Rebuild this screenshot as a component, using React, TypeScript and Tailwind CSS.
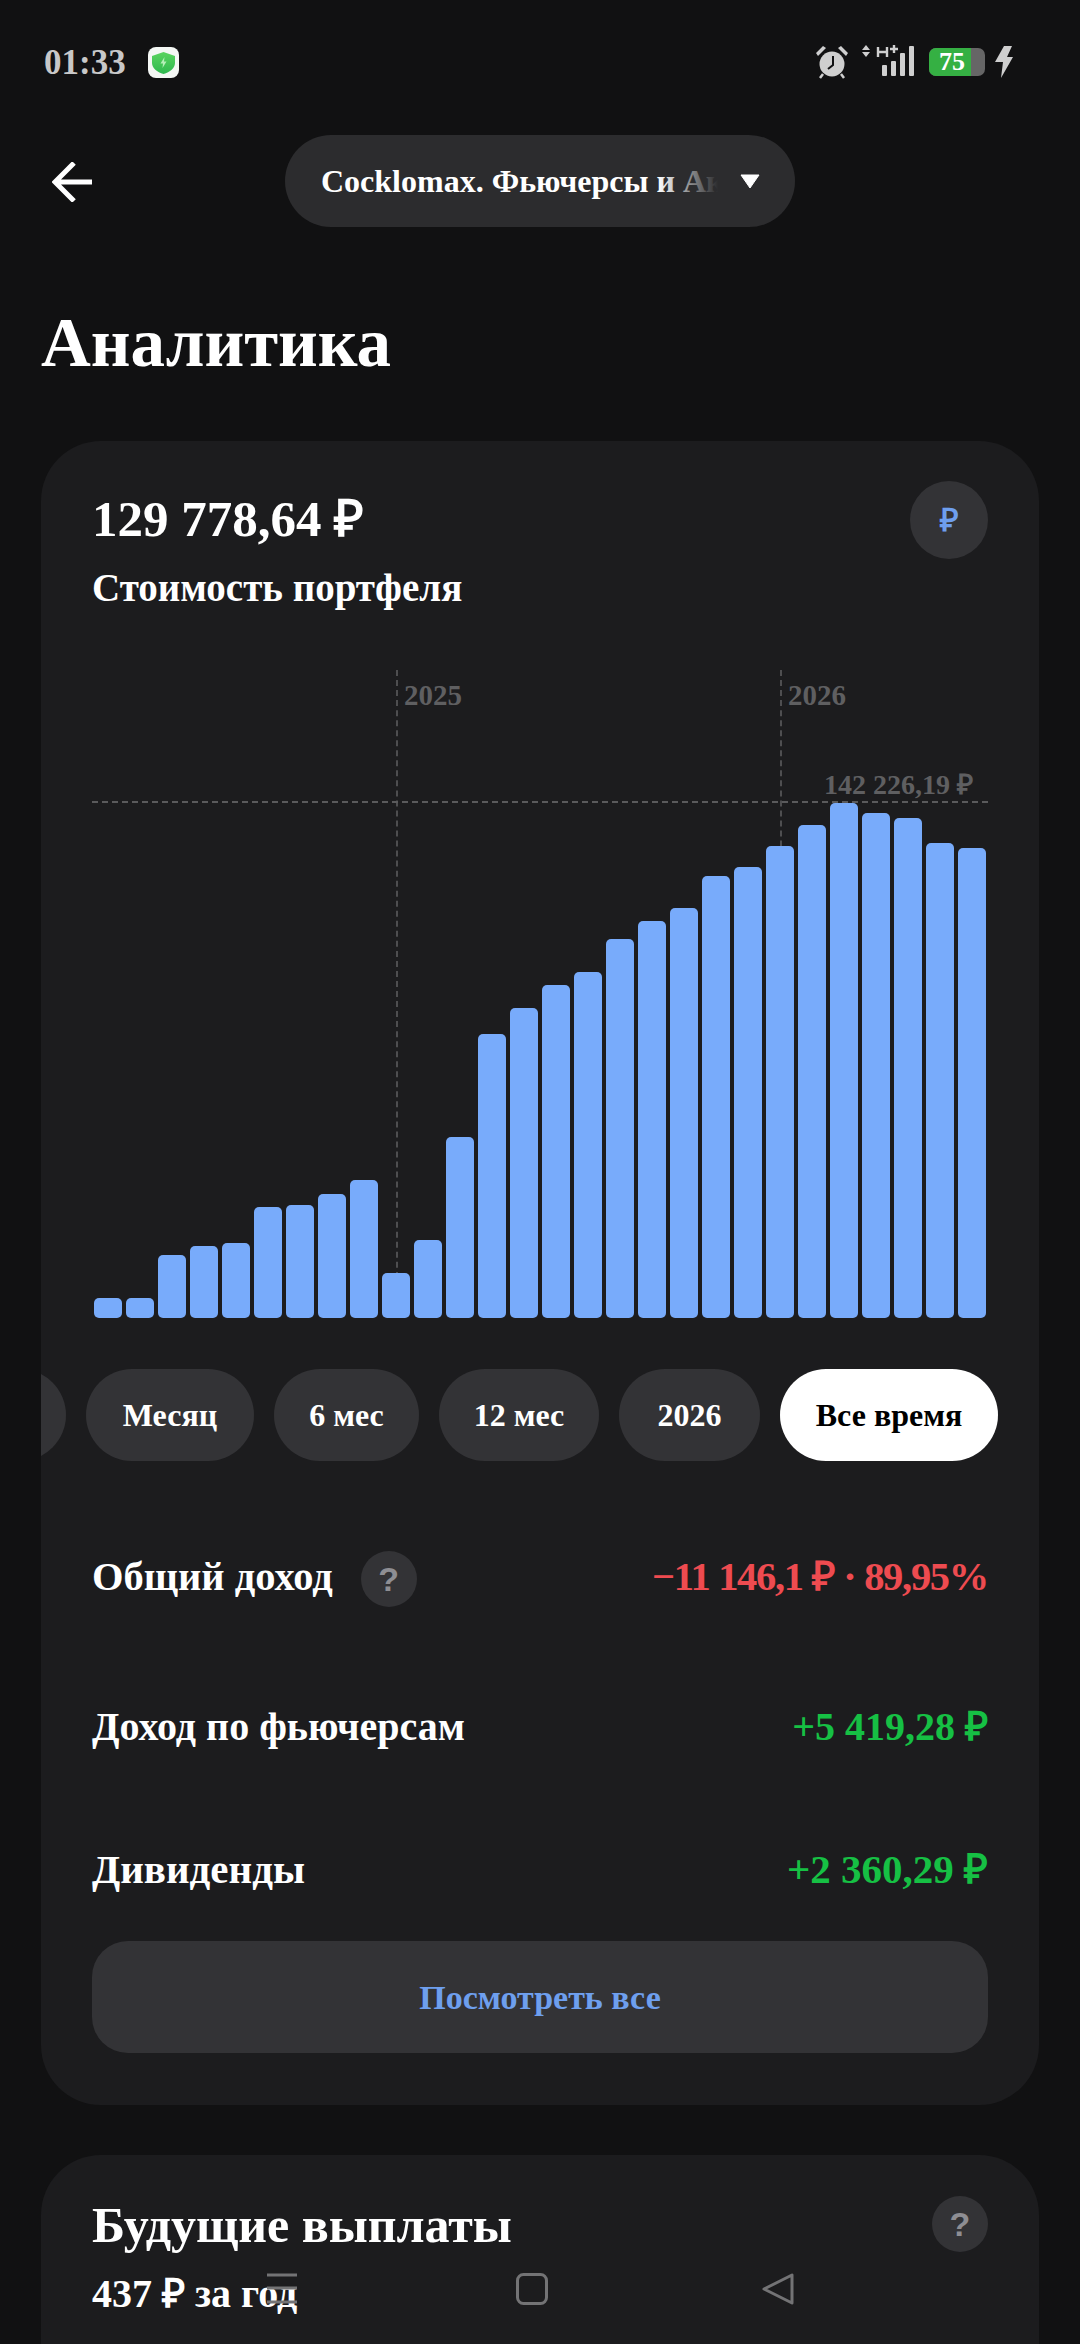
const serif = "font-['Liberation_Serif',serif]"

const bars = [20, 20, 63, 72, 75, 111, 113, 124, 138, 45, 78, 181, 284, 310, 333, 346, 379, 397, 410, 442, 451, 472, 493, 515, 505, 500, 475, 470]

const periods = [
  { label: "Месяц", w: "w-[168px]" },
  { label: "6 мес", w: "w-[145px]" },
  { label: "12 мес", w: "w-[160px]" },
  { label: "2026", w: "w-[141px]" },
]

const rows = [
  { label: "Доход по фьючерсам", value: "+5 419,28 ₽", cls: "mt-[50px] text-[40px]" },
  { label: "Дивиденды", value: "+2 360,29 ₽", cls: "mt-[43px] text-[41px]" },
]

const QuestionBadge = () => (
  <div className="flex h-14 w-14 shrink-0 items-center justify-center rounded-full bg-[#333336] text-[34px] font-bold text-[#8e8e93] font-['Liberation_Sans',sans-serif]">
    ?
  </div>
)

const StatusBar = () => (
  <div className="flex h-[124px] items-center justify-between pl-11 pr-[67px]">
    <div className="flex items-center gap-[22px]">
      <span className="text-[35px] font-bold leading-none text-[#c8c8c8]">01:33</span>
      <svg width="31" height="31" viewBox="0 0 31 31">
        <defs>
          <linearGradient id="shield" x1="0" y1="0" x2="0" y2="1">
            <stop offset="0" stopColor="#5ad45f" />
            <stop offset="1" stopColor="#2fb84f" />
          </linearGradient>
        </defs>
        <rect width="31" height="31" rx="8" fill="#f4f7f4" />
        <path d="M15.5 5 L27 9 V16 C27 21 22 25 15.5 27 C9 25 4 21 4 16 V9 Z" fill="url(#shield)" />
        <path d="M16.5 10 L12.5 16.5 H15 L14.5 21 L18.5 14.5 H16 Z" fill="#b5efb8" />
      </svg>
    </div>
    <div className="flex items-center">
      <svg width="34" height="34" viewBox="0 0 34 34" fill="#cfcfcf" className="mr-[13px]">
        <circle cx="17" cy="19" r="12.5" />
        <path d="M1 8 L8 1 L11 3 L3 11 Z M33 8 L26 1 L23 3 L31 11 Z" />
        <path d="M8 29 L5 33 M26 29 L29 33" stroke="#cfcfcf" strokeWidth="2.5" />
        <path d="M18 11 V20 L13 24" stroke="#111112" strokeWidth="2" fill="none" />
      </svg>
      <svg width="54" height="34" viewBox="0 0 54 34" fill="#cfcfcf" className="mr-[13px]">
        <path d="M4 0 L8 5 H0 Z M4 12 L8 7 H0 Z" />
        <path d="M16 2 V12 M25 2 V12 M16 7 H25 M28 4 H36 M32 0 V8" stroke="#cfcfcf" strokeWidth="2.4" fill="none" />
        <rect x="20" y="20" width="5" height="11" rx="1" />
        <rect x="29" y="16" width="5" height="15" rx="1" />
        <rect x="38" y="8" width="5" height="23" rx="1" />
        <rect x="47" y="1" width="5" height="30" rx="1" />
      </svg>
      <div className="relative mr-[10px] h-7 w-[56px] overflow-hidden rounded-[7px] bg-[#666]">
        <div className="flex h-full w-[42px] items-center justify-center bg-[#35b043] pl-1 text-[26px] font-bold leading-none text-white">75</div>
      </div>
      <svg width="18" height="32" viewBox="0 0 18 32" fill="#cfcfcf">
        <path d="M9 0 L17 0 L12 11 L18 11 L6 32 L8 16 L0 16 Z" />
      </svg>
    </div>
  </div>
)

const Header = () => (
  <div className="relative mt-[11px] flex h-[92px] items-center justify-center">
    <svg width="40" height="40" viewBox="0 0 40 40" fill="none" stroke="#fff" strokeWidth="5" className="absolute left-[52px] top-[27px]">
      <path d="M40 20 H3 M22 1 L3 20 L22 39" />
    </svg>
    <div className="flex h-[92px] w-[510px] items-center rounded-full bg-[#2c2c2e] pl-9">
      <div className="relative w-[397px] overflow-hidden whitespace-nowrap text-[32px] font-bold text-white">
        Cocklomax. Фьючерсы и Акции
        <div className="absolute inset-y-0 right-0 w-[60px] bg-gradient-to-r from-transparent to-[#2c2c2e]" />
      </div>
      <svg width="20" height="15" viewBox="0 0 20 15" className="ml-[22px]">
        <path d="M1 1 H19 L10 14 Z" fill="#fff" stroke="#fff" strokeLinejoin="round" />
      </svg>
    </div>
  </div>
)

const Chart = () => (
  <div className="relative mx-[51px] mt-[58px] flex h-[648px] items-end gap-1 pl-[2px]">
    {bars.map((h, i) => (
      <div key={i} className="relative z-10 w-7 rounded-[5px] bg-[#78abfb]" style={{ height: h }} />
    ))}
    <div className="absolute bottom-0 left-[304px] top-0 border-l-2 border-dashed border-[#4e4e50]" />
    <div className="absolute left-[312px] top-[8px] text-[29px] font-bold leading-[34px] text-[#5f5f61]">2025</div>
    <div className="absolute bottom-0 left-[688px] top-0 border-l-2 border-dashed border-[#4e4e50]" />
    <div className="absolute left-[696px] top-[8px] text-[29px] font-bold leading-[34px] text-[#5f5f61]">2026</div>
    <div className="absolute inset-x-0 top-[131px] border-t-2 border-dashed border-[#5a5a5c]" />
    <div className="absolute right-[15px] top-[98px] text-[28px] font-bold leading-[34px] text-[#5f5f61]">142 226,19 ₽</div>
  </div>
)

export default function App() {
  return (
    <div className={`relative h-[2344px] w-[1080px] overflow-hidden bg-[#111112] ${serif}`}>
      <StatusBar />
      <Header />
      <h1 className="ml-[41px] mt-[76px] h-[138px] text-[69px] font-bold leading-[80px] text-white">Аналитика</h1>

      <div className="mx-[41px] h-[1664px] overflow-hidden rounded-[60px] bg-[#1c1c1e]">
        <div className="flex items-start justify-between px-[51px] pt-10">
          <div className="pt-2">
            <div className="text-[51px] font-bold leading-[60px] text-white">129 778,64 ₽</div>
            <div className="mt-[15px] text-[39px] font-bold leading-[48px] text-white">Стоимость портфеля</div>
          </div>
          <div className="flex h-[78px] w-[78px] items-center justify-center rounded-full bg-[#333336] text-[32px] font-bold text-[#6e9fee]">₽</div>
        </div>

        <Chart />

        <div className="mt-[51px] flex justify-end gap-[20px] pr-[41px]">
          <div className="h-[92px] w-[100px] shrink-0 rounded-full bg-[#333336]" />
          {periods.map((p) => (
            <div key={p.label} className={`flex h-[92px] ${p.w} shrink-0 items-center justify-center rounded-full bg-[#333336] text-[32px] font-bold text-white`}>
              {p.label}
            </div>
          ))}
          <div className="flex h-[92px] w-[218px] shrink-0 items-center justify-center rounded-full bg-white text-[32px] font-bold text-black">Все время</div>
        </div>

        <div className="mt-[66px] flex h-[100px] items-center justify-between px-[51px] text-[40.5px] font-bold">
          <div className="flex items-center gap-[28px] text-white">
            Общий доход
            <div className="mt-1"><QuestionBadge /></div>
          </div>
          <span className="tracking-[-1.3px] text-[#ee4b50]">−11 146,1 ₽ · 89,95%</span>
        </div>
        {rows.map((r) => (
          <div key={r.label} className={`${r.cls} flex h-[100px] items-center justify-between px-[51px] font-bold`}>
            <span className="text-white">{r.label}</span>
            <span className="text-[#16c044]">{r.value}</span>
          </div>
        ))}
        <div className="mx-[51px] mt-[21px] flex h-[112px] items-center justify-center rounded-[36px] bg-[#333336] text-[34px] font-bold text-[#6e9fee]">
          Посмотреть все
        </div>
      </div>

      <div className="mx-[41px] mt-[50px] h-[300px] rounded-[60px] bg-[#1c1c1e] px-[51px] pt-[41px]">
        <div className="flex items-start justify-between">
          <div className="text-[50px] font-bold leading-[58px] text-white">Будущие выплаты</div>
          <QuestionBadge />
        </div>
        <div className="mt-[15px] text-[40px] font-bold leading-[50px] text-white">437 ₽ за год</div>
      </div>

      <div className="absolute left-0 top-[2273px] h-8 w-full">
        <svg width="32" height="32" viewBox="0 0 32 32" fill="none" stroke="#737375" strokeWidth="3" className="absolute left-[266px] top-0">
          <path d="M1 2 H31 M1 15 H31 M1 29 H31" />
        </svg>
        <svg width="32" height="32" viewBox="0 0 32 32" fill="none" stroke="#737375" strokeWidth="3" className="absolute left-[516px] top-0">
          <rect x="1.5" y="1.5" width="29" height="29" rx="6" />
        </svg>
        <svg width="32" height="32" viewBox="0 0 32 32" fill="none" stroke="#737375" strokeWidth="3" strokeLinejoin="round" className="absolute left-[762px] top-0">
          <path d="M30 2 V30 L2 16 Z" />
        </svg>
      </div>
    </div>
  )
}
